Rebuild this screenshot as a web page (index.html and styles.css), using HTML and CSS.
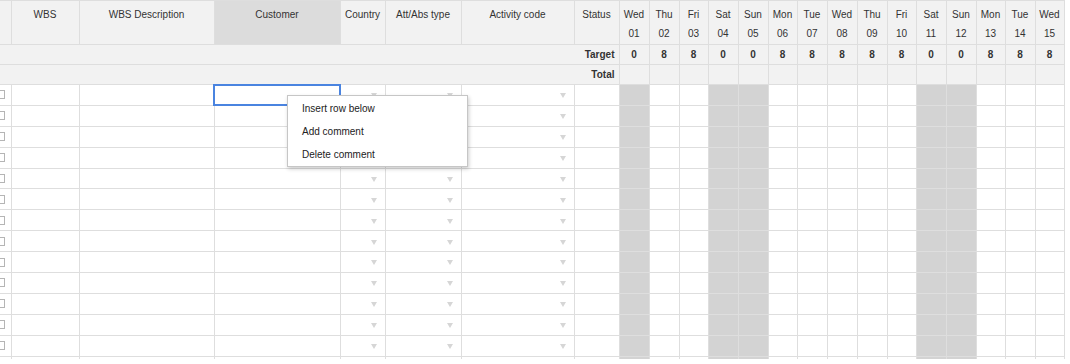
FILE: index.html
```html
<!DOCTYPE html>
<html lang="en">
<head>
    <meta charset="UTF-8">
    <title>Timesheet</title>
    <link rel="stylesheet" href="styles.css">
    <script>
const days = [
    ['Wed', '01', 0], ['Thu', '02', 8], ['Fri', '03', 8], ['Sat', '04', 0], ['Sun', '05', 0],
    ['Mon', '06', 8], ['Tue', '07', 8], ['Wed', '08', 8], ['Thu', '09', 8], ['Fri', '10', 8],
    ['Sat', '11', 0], ['Sun', '12', 0], ['Mon', '13', 8], ['Tue', '14', 8], ['Wed', '15', 8]
];
// day column widths, so the grid lines land where the sheet had them
const dayWidths = [30, 30, 29, 30, 30, 29, 30, 30, 30, 29, 30, 30, 29, 30, 29];
const ROWS = 14;

function buildSheet() {
    const cols = document.getElementById('cols');
    dayWidths.forEach(w => {
        const col = document.createElement('col');
        col.style.width = w + 'px';
        cols.appendChild(col);
    });

    const headRow = document.getElementById('headRow');
    const targetRow = document.getElementById('targetRow');
    const totalRow = document.getElementById('totalRow');
    days.forEach(d => {
        headRow.insertAdjacentHTML('beforeend', `<th>${d[0]}<br>${d[1]}</th>`);
        targetRow.insertAdjacentHTML('beforeend', `<td class="num">${d[2]}</td>`);
        totalRow.insertAdjacentHTML('beforeend', `<td></td>`);
    });

    const body = document.getElementById('sheetBody');
    for (let i = 0; i < ROWS; i++) {
        const row = document.createElement('tr');
        let html = `
            <td class="check"><span class="box"></span></td>
            <td></td>
            <td></td>
            <td class="${i === 0 ? 'selected' : ''}"></td>
            <td class="pick"><span class="arrow"></span></td>
            <td class="pick"><span class="arrow"></span></td>
            <td class="pick"><span class="arrow"></span></td>
            <td></td>`;
        days.forEach(d => {
            html += `<td class="${d[2] === 0 ? 'off' : ''}"></td>`;
        });
        row.innerHTML = html;
        body.appendChild(row);
    }
}

document.addEventListener('DOMContentLoaded', buildSheet);
    </script>
</head>
<body>

    <div class="sheet">
        <table class="grid">
            <colgroup id="cols">
                <col style="width:11px">
                <col style="width:68px">
                <col style="width:135px">
                <col style="width:126px">
                <col style="width:45px">
                <col style="width:76px">
                <col style="width:113px">
                <col style="width:45px">
            </colgroup>
            <thead>
                <tr id="headRow">
                    <th class="first"></th>
                    <th>WBS</th>
                    <th>WBS Description</th>
                    <th class="sorted">Customer</th>
                    <th>Country</th>
                    <th>Att/Abs type</th>
                    <th>Activity code</th>
                    <th>Status</th>
                </tr>
                <tr id="targetRow" class="sum">
                    <td colspan="8" class="label">Target</td>
                </tr>
                <tr id="totalRow" class="sum">
                    <td colspan="8" class="label">Total</td>
                </tr>
            </thead>
            <tbody id="sheetBody">
                <!-- rows built on load -->
            </tbody>
        </table>

        <div class="menu">
            <div class="menu-item">Insert row below</div>
            <div class="menu-item">Add comment</div>
            <div class="menu-item">Delete comment</div>
        </div>
    </div>

</body>
</html>
```

FILE: styles.css
```css
body {
    margin: 0;
    font-family: 'Liberation Sans', Arial, sans-serif;
    font-size: 10px;
    color: #333;
    background-color: #fff;
}
.sheet {
    position: relative;
    height: 359px;
    overflow: hidden;
}
.grid {
    width: 1064px;
    border-collapse: collapse;
    table-layout: fixed;
}
.grid th, .grid td {
    border: 1px solid #dedede;
    padding: 0;
    white-space: nowrap;
    overflow: hidden;
}
.grid th {
    height: 39px;
    padding-top: 4px;
    line-height: 19px;
    background-color: #f2f2f2;
    font-weight: normal;
    text-align: center;
    vertical-align: top;
}
.grid th.first,
.grid .label {
    border-left: none;
}
.grid th.sorted {
    background-color: #dcdcdc;
}
.sum td {
    height: 19px;
    background-color: #f2f2f2;
    font-weight: bold;
    text-align: center;
}
.sum td.label {
    text-align: right;
    padding-right: 4px;
}
tbody td {
    height: 19.9px;
    background-color: #fff;
}
tbody td.check {
    border-left: none;
}
.box {
    display: block;
    width: 7px;
    height: 7px;
    margin-left: -4px;
    border: 1px solid #b5b5b5;
    background-color: #fff;
}
tbody td.off {
    background-color: #d3d3d3;
}
td.pick {
    text-align: right;
    padding-right: 8px;
}
.arrow {
    display: inline-block;
    border-left: 3px solid transparent;
    border-right: 3px solid transparent;
    border-top: 5px solid #d6d6d6;
    vertical-align: middle;
}
td.selected {
    outline: 2px solid #4a84e0;
    outline-offset: -1px;
}

/* right-click menu over the grid */
.menu {
    position: absolute;
    left: 287px;
    top: 95px;
    width: 179px;
    padding-top: 1px;
    background-color: #fff;
    border: 1px solid #c6c6c6;
    box-shadow: 1px 2px 4px rgba(0, 0, 0, 0.2);
}
.menu-item {
    height: 23px;
    line-height: 23px;
    padding-left: 14px;
    color: #222;
    font-size: 10px;
}
```
